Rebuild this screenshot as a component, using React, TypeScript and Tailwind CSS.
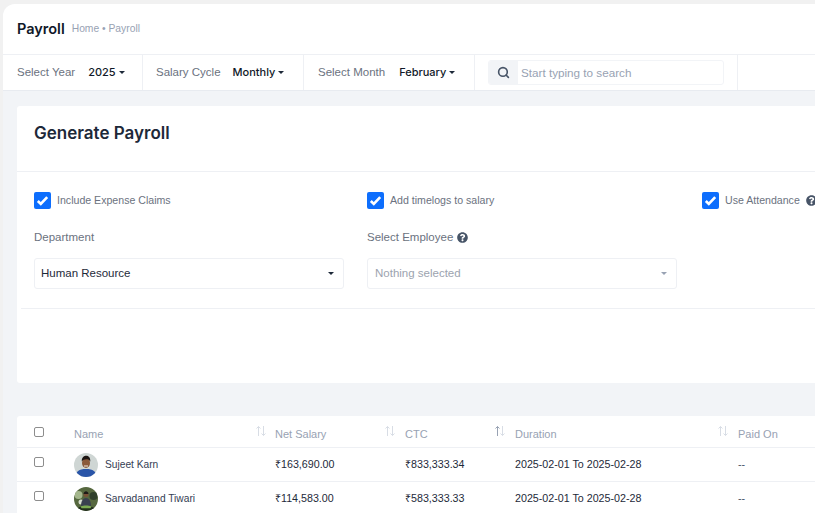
import { Search } from "lucide-react";

const font = "font-['Liberation_Sans',Arial,sans-serif]";
const heading = "font-['Inter','Liberation_Sans',sans-serif]";

function Caret({ className = "border-t-[#1d2939]" }: { className?: string }) {
  return <span className={`inline-block w-0 h-0 border-x-[3.500px] border-x-transparent border-t-[3.500px] ${className}`} />;
}

function Help({ className = "" }: { className?: string }) {
  return (
    <svg viewBox="0 0 512 512" className={`w-[11px] h-[11px] fill-[#475467] ${className}`}>
      <path d="M504 256c0 137-111 248-248 248S8 393 8 256C8 119 119 8 256 8s248 111 248 248zM262.700 90c-54.500 0-89.300 23-116.500 63.800-3.500 5.300-2.400 12.400 2.700 16.300l34.700 26.300c5.200 3.900 12.600 3 16.700-2.100 17.900-22.700 30.100-35.800 57.300-35.800 20.400 0 45.700 13.100 45.700 33 0 15-12.400 22.700-32.600 34-23.600 13.200-54.800 29.700-54.800 70.900V300c0 6.600 5.400 12 12 12h56c6.600 0 12-5.400 12-12v-1.300c0-28.600 83.500-29.800 83.500-107.100C379.400 133.400 319 90 262.700 90zM256 339c-25.500 0-46.200 20.700-46.200 46.200 0 25.500 20.700 46.200 46.200 46.200s46.200-20.700 46.200-46.200c0-25.500-20.700-46.200-46.200-46.200z" />
    </svg>
  );
}

function Check({ label, help, width }: { label: string; help?: boolean; width: string }) {
  return (
    <div className={`flex items-center ${width}`}>
      <span className="w-[17px] h-[17px] rounded-[2px] bg-[#0d6efd] flex items-center justify-center shrink-0">
        <svg viewBox="0 0 16 16" className="w-[15px] h-[15px]">
          <path d="M3 8.500l3.200 3.200L13 4.400" fill="none" stroke="#fff" strokeWidth="2.800" />
        </svg>
      </span>
      <span className="ml-[6px] text-[10.600px] text-[#6b7280] whitespace-nowrap">{label}</span>
      {help && <Help className="ml-[6px] shrink-0" />}
    </div>
  );
}

function FilterItem({ label, value, width, pad, gap }: { label: string; value: string; width: string; pad: string; gap: string }) {
  return (
    <div className={`flex items-center h-full border-r border-[#eef0f4] shrink-0 ${width} ${pad}`}>
      <span className="text-[11.500px] text-[#6b7280] whitespace-nowrap">{label}</span>
      <span className={`${heading} text-[11px] font-medium text-[#101828] whitespace-nowrap ${gap}`}>{value}</span>
      <Caret className="ml-[3px] border-t-[#1d2939]" />
    </div>
  );
}

function SortArrows({ dark }: { dark?: boolean }) {
  return (
    <svg viewBox="0 0 12 12" className="w-3 h-3 shrink-0">
      <path d="M3.500 11V1.500M1.500 3.500l2-2 2 2" fill="none" stroke={dark ? "#98a2b3" : "#d8dde5"} strokeWidth="1" />
      <path d="M8.500 1v9.500M6.500 8.500l2 2 2-2" fill="none" stroke="#d8dde5" strokeWidth="1" />
    </svg>
  );
}

function Box() {
  return <span className="block w-[10px] h-[10px] rounded-[2px] border border-[#8d8d8d] bg-white" />;
}

function AvatarOne() {
  return (
    <svg viewBox="0 0 24 24" className="w-6 h-6 rounded-full shrink-0">
      <rect width="24" height="24" fill="#cfd6d4" />
      <path d="M1.500 24c0-5.500 3.500-8 10.500-8s10.500 2.500 10.500 8z" fill="#2a55a8" />
      <ellipse cx="12" cy="10" rx="4" ry="5" fill="#8a5a3c" />
      <path d="M7.800 8.500C7.500 4.500 10 2.800 12.200 2.800s4.300 1.500 4.100 5.700c-1-2-2.700-2.500-4.200-2.300-1.800.2-3.300.6-4.300 2.300z" fill="#1c1512" />
      <path d="M10 12.500h4v1h-4z" fill="#f1e9e2" />
    </svg>
  );
}

function AvatarTwo() {
  return (
    <svg viewBox="0 0 24 24" className="w-6 h-6 rounded-full shrink-0">
      <rect width="24" height="24" fill="#56683f" />
      <circle cx="4.500" cy="8" r="4" fill="#a5b78d" />
      <circle cx="19.500" cy="9" r="4" fill="#2f3f2a" />
      <circle cx="7" cy="15" r="2.500" fill="#d8ded0" />
      <path d="M7 19c0-5 2-8 5-8s5 3 5 8z" fill="#3a4150" />
      <circle cx="12" cy="7.500" r="2.500" fill="#7a5238" />
      <path d="M9.500 7c.2-2 1.300-2.800 2.500-2.800S14.300 5 14.500 7z" fill="#1e1a17" />
      <path d="M3 24c0-4 4-5 9-5s9 1 9 5z" fill="#23301e" />
      <path d="M6.500 19.500c2-1 3.500-1 5.500-1s3.500 0 5.500 1l-1 1.800h-9z" fill="#7cab52" />
    </svg>
  );
}

const rows = [
  { name: "Sujeet Karn", net: "₹163,690.00", ctc: "₹833,333.34", avatar: <AvatarOne /> },
  { name: "Sarvadanand Tiwari", net: "₹114,583.00", ctc: "₹583,333.33", avatar: <AvatarTwo /> },
];

export default function App() {
  return (
    <div className={`${font} w-[815px] h-[513px] overflow-hidden bg-[#f1f1f1] pt-1 pl-[3px]`}>
      <div className="w-[812px] h-[509px] rounded-tl-[12px] overflow-hidden bg-[#f2f4f7] flex flex-col">
        {/* Title bar */}
        <div className="h-[51px] shrink-0 bg-white flex items-center pl-[14px] border-b border-[#eef0f4]">
          <h1 className={`${heading} text-[14.500px] font-semibold text-[#101828]`}>Payroll</h1>
          <span className="ml-[7px] text-[10.300px] text-[#98a2b3]">Home • Payroll</span>
        </div>

        {/* Filters */}
        <div className="h-[36px] shrink-0 bg-white flex items-center border-b border-[#e8ebf0]">
          <FilterItem label="Select Year" value="2025" width="w-[140px]" pad="pl-[14px]" gap="ml-[13px]" />
          <FilterItem label="Salary Cycle" value="Monthly" width="w-[161px]" pad="pl-[13px]" gap="ml-[12px]" />
          <FilterItem label="Select Month" value="February" width="w-[171px]" pad="pl-[14px]" gap="ml-[14px]" />
          <div className="flex items-center h-full w-[263px] pl-[13px] border-r border-[#eef0f4] shrink-0">
            <div className="w-[236px] h-[25px] flex rounded-[3px] border border-[#f2f4f7] overflow-hidden">
              <span className="w-[29px] bg-[#f2f4f7] flex items-center justify-center">
                <Search className="w-[13px] h-[13px] text-[#475467]" strokeWidth={3} />
              </span>
              <span className="pl-[3px] text-[11.700px] leading-[23px] text-[#98a2b3] whitespace-nowrap">Start typing to search</span>
            </div>
          </div>
        </div>

        {/* Generate card */}
        <div className="ml-[14px] mt-[15px] w-[810px] h-[277px] shrink-0 bg-white rounded-l-[3px]">
          <div className={`${heading} h-[66px] flex items-center pl-[17px] pb-[10px] border-b border-[#eef0f4]`}>
            <h2 className="text-[17px] font-semibold text-[#1d2939]">Generate Payroll</h2>
          </div>
          <div className="pl-[17px] pt-[20px]">
            <div className="flex">
              <Check label="Include Expense Claims" width="w-[333px]" />
              <Check label="Add timelogs to salary" width="w-[335px]" />
              <Check label="Use Attendance" help width="w-[120px]" />
            </div>
            <div className="flex mt-[19px]">
              <div className="w-[333px]">
                <div className="text-[11.500px] leading-[18px] text-[#6b7280]">Department</div>
                <div className="mt-[12px] w-[310px] h-[31px] rounded-[3px] border border-[#eef0f4] flex items-center justify-between pl-[6px] pr-[9px]">
                  <span className="text-[11.500px] text-[#1d2939]">Human Resource</span>
                  <Caret className="border-t-[#1d2939]" />
                </div>
              </div>
              <div className="w-[335px]">
                <div className="flex items-center text-[11.500px] leading-[18px] text-[#6b7280]">
                  Select Employee
                  <Help className="ml-[4px]" />
                </div>
                <div className="mt-[12px] w-[310px] h-[31px] rounded-[3px] border border-[#eef0f4] flex items-center justify-between pl-[7px] pr-[9px]">
                  <span className="text-[11.500px] text-[#9ca3af]">Nothing selected</span>
                  <Caret className="border-t-[#98a2b3]" />
                </div>
              </div>
            </div>
          </div>
          <div className="mt-[19px] ml-[4px] border-t border-[#eef0f4]" />
        </div>

        {/* Table */}
        <div className="ml-[14px] mt-[33px] w-[810px] shrink-0 bg-white rounded-t-[3px] text-[10.700px]">
          <div className="h-[32px] flex border-b border-[#eef0f4] text-[11px] text-[#98a2b3]">
            <div className="w-[57px] pl-[17px] pt-[11px]"><Box /></div>
            <div className="w-[201px] flex justify-between pr-[8px] pt-[10px]">
              <span>Name</span>
              <span className="-mt-[1px]"><SortArrows /></span>
            </div>
            <div className="w-[130px] flex justify-between pr-[9px] pt-[10px]">
              <span>Net Salary</span>
              <span className="-mt-[1px]"><SortArrows /></span>
            </div>
            <div className="w-[110px] flex justify-between pr-[9px] pt-[10px]">
              <span>CTC</span>
              <span className="-mt-[1px]"><SortArrows dark /></span>
            </div>
            <div className="w-[223px] flex justify-between pr-[9px] pt-[10px]">
              <span>Duration</span>
              <span className="-mt-[1px]"><SortArrows /></span>
            </div>
            <div className="pt-[10px]">Paid On</div>
          </div>
          {rows.map((r) => (
            <div key={r.name} className="h-[34px] flex items-center border-b border-[#eef0f4] text-[#1d2939]">
              <div className="w-[57px] pl-[17px] -mt-[5px]"><Box /></div>
              <div className="w-[201px] flex items-center">
                {r.avatar}
                <span className="ml-[7px] text-[10.200px] whitespace-nowrap text-[#344054]">{r.name}</span>
              </div>
              <div className="w-[130px]">{r.net}</div>
              <div className="w-[110px]">{r.ctc}</div>
              <div className="w-[223px]">2025-02-01 To 2025-02-28</div>
              <div className="text-[#475467]">--</div>
            </div>
          ))}
        </div>
      </div>
    </div>
  );
}
